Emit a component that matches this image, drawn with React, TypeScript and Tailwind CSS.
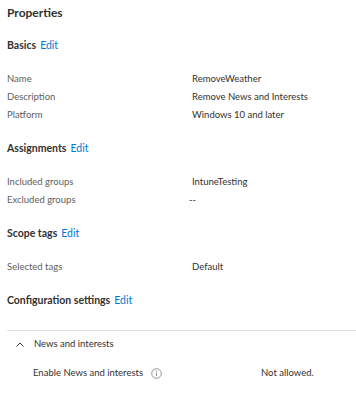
const font = { fontFamily: 'Lato, "Open Sans", sans-serif' };

type Row = { label: string; value: string; shift?: boolean };

function SectionHeading({ title }: { title: string }) {
  return (
    <div className="flex h-[18px] items-center gap-[4px] text-[10.5px]">
      <span className="font-bold text-[#323130]">{title}</span>
      <span className="text-[#0078d4]">Edit</span>
    </div>
  );
}

function Rows({ rows }: { rows: Row[] }) {
  return (
    <div className="mt-[15px] flex flex-col">
      {rows.map((r) => (
        <div key={r.label} className="grid h-[18px] grid-cols-[185px_1fr] items-center text-[9.5px]">
          <span className="text-[#605e5c]">{r.label}</span>
          <span className={r.shift ? "-ml-[3px] text-[#323130]" : "text-[#323130]"}>{r.value}</span>
        </div>
      ))}
    </div>
  );
}

export default function App() {
  return (
    <div className="h-[399px] w-[356px] overflow-hidden bg-white pl-[7px]" style={font}>
      <div className="flex h-[18px] mt-[4px] items-center text-[12px] font-bold text-[#323130]">
        Properties
      </div>

      <div className="mt-[15px]">
        <SectionHeading title="Basics" />
        <Rows
          rows={[
            { label: "Name", value: "RemoveWeather" },
            { label: "Description", value: "Remove News and Interests" },
            { label: "Platform", value: "Windows 10 and later" },
          ]}
        />
      </div>

      <div className="mt-[16px]">
        <SectionHeading title="Assignments" />
        <Rows
          rows={[
            { label: "Included groups", value: "IntuneTesting" },
            { label: "Excluded groups", value: "--", shift: true },
          ]}
        />
      </div>

      <div className="mt-[16px]">
        <SectionHeading title="Scope tags" />
        <Rows rows={[{ label: "Selected tags", value: "Default" }]} />
      </div>

      <div className="mt-[16px]">
        <SectionHeading title="Configuration settings" />
      </div>

      <div className="mt-[20px] border-t border-[#e1dfdd]">
        <div className="flex h-[26px] items-center text-[9.5px] text-[#323130]">
          <svg width="8" height="5" viewBox="0 0 8 5" className="ml-[9px] mr-[10px]">
            <path d="M0.5 4.5 L4 1 L7.5 4.5" fill="none" stroke="#323130" strokeWidth="1" />
          </svg>
          <span>News and interests</span>
        </div>
        <div className="mt-[7px] grid h-[18px] grid-cols-[254px_1fr] items-center text-[9.5px]">
          <div className="flex items-center pl-[26px] text-[#323130]">
            <span>Enable News and interests</span>
            <svg width="11" height="11" viewBox="0 0 11 11" className="ml-[8px]">
              <circle cx="5.5" cy="5.5" r="4.8" fill="none" stroke="#8a8886" strokeWidth="0.9" />
              <line x1="5.5" y1="4.6" x2="5.5" y2="8" stroke="#8a8886" strokeWidth="0.9" />
              <circle cx="5.5" cy="3.2" r="0.6" fill="#8a8886" />
            </svg>
          </div>
          <span className="text-[#323130]">Not allowed.</span>
        </div>
        <div className="mt-[17px] border-t border-[#e1dfdd]" />
      </div>
    </div>
  );
}
